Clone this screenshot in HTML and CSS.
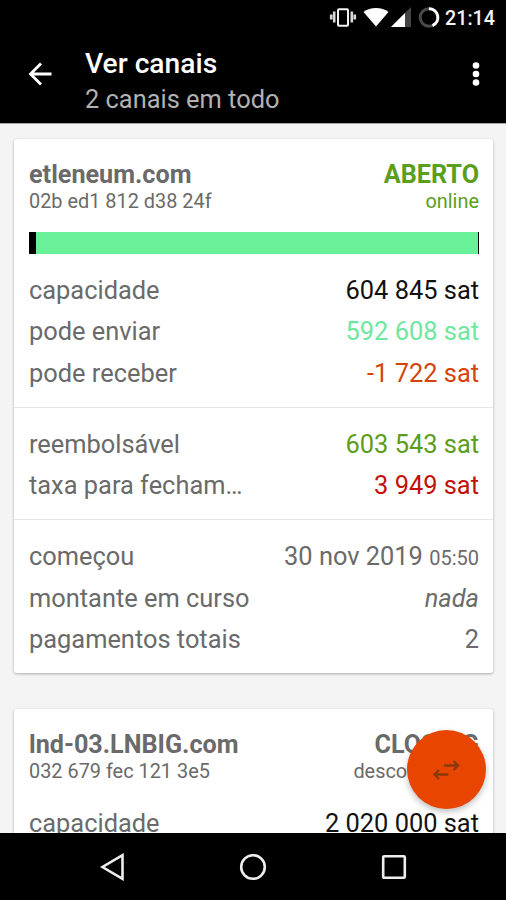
FILE: index.html
```html
<!DOCTYPE html>
<html lang="pt">
<head>
    <meta charset="UTF-8">
    <meta name="viewport" content="width=device-width, initial-scale=1.0">
    <title>Ver canais</title>
    <link rel="stylesheet" href="styles.css">
</head>
<body>
    <div class="status-bar">
        <svg class="status-icons" width="112" height="24" viewBox="0 0 112 24">
            <!-- vibrate -->
            <rect x="9" y="2.2" width="10" height="16.6" rx="1" fill="none" stroke="#f4f4f4" stroke-width="2"/>
            <path d="M5.200 4.500v11M2.200 7.500v5M22.800 4.500v11M25.800 7.500v5" stroke="#d8d8d8" stroke-width="2.600"/>
            <!-- wifi -->
            <path d="M34.500 5C41 -.2 53 -.2 59.500 5L47 19.500z" fill="#fff"/>
            <!-- signal -->
            <path d="M82 0V20H62z" fill="#444"/>
            <path d="M76 6V20H62z" fill="#fff"/>
            <!-- battery -->
            <circle cx="100" cy="10.500" r="8.800" fill="none" stroke="#4a4a4a" stroke-width="3"/>
            <path d="M100 1.700A8.800 8.800 0 0 1 103.500 18.600" fill="none" stroke="#fff" stroke-width="3"/>
        </svg>
        <span class="clock">21:14</span>
    </div>
    <header class="app-bar">
        <svg class="back" width="24" height="24" viewBox="0 0 24 24" fill="none" stroke="#fff" stroke-width="2.8">
            <path d="M23.500 12H2.500M13 1.500L2.500 12l10.500 10.500"/>
        </svg>
        <div class="titles">
            <h1>Ver canais</h1>
            <p>2 canais em todo</p>
        </div>
        <svg class="more" width="8" height="26" viewBox="0 0 8 26" fill="#fff">
            <circle cx="4" cy="4.500" r="3.300"/>
            <circle cx="4" cy="13" r="3.300"/>
            <circle cx="4" cy="21.500" r="3.300"/>
        </svg>
    </header>

    <main class="channels">
        <div class="card">
            <div class="card-head">
                <div>
                    <h2>etleneum.com</h2>
                    <p>02b ed1 812 d38 24f</p>
                </div>
                <div class="state open">
                    <h2>ABERTO</h2>
                    <p>online</p>
                </div>
            </div>
            <div class="balance"><div class="can-send"></div></div>
            <div class="section first">
                <div class="row"><span>capacidade</span><span class="black">604 845 sat</span></div>
                <div class="row"><span>pode enviar</span><span class="mint">592 608 sat</span></div>
                <div class="row"><span>pode receber</span><span class="orange">-1 722 sat</span></div>
            </div>
            <div class="section">
                <div class="row"><span>reembolsável</span><span class="green">603 543 sat</span></div>
                <div class="row"><span>taxa para fecham…</span><span class="red">3 949 sat</span></div>
            </div>
            <div class="section">
                <div class="row"><span>começou</span><span>30 nov 2019 <small>05:50</small></span></div>
                <div class="row"><span>montante em curso</span><em>nada</em></div>
                <div class="row"><span>pagamentos totais</span><span>2</span></div>
            </div>
        </div>

        <div class="card">
            <div class="card-head">
                <div>
                    <h2>lnd-03.LNBIG.com</h2>
                    <p>032 679 fec 121 3e5</p>
                </div>
                <div class="state">
                    <h2>CLOSING</h2>
                    <p>desconectado</p>
                </div>
            </div>
            <div class="section first closing">
                <div class="row"><span>capacidade</span><span class="black">2 020 000 sat</span></div>
            </div>
        </div>

        <button class="fab" aria-label="Transferir">
            <svg width="28" height="22" viewBox="0 0 28 22" fill="none" stroke="#8a3a0a" stroke-width="2.400">
                <path d="M12 6.500H26M21.500 2l4.500 4.500-4.500 4.500M16.500 15.500H2.500M7 11l-4.500 4.500 4.500 4.500"/>
            </svg>
        </button>
    </main>

    <nav class="nav-bar">
        <svg width="28" height="28" viewBox="0 0 28 28"><path d="M23.500 2.200V25.800L3.500 14z"/></svg>
        <svg width="28" height="28" viewBox="0 0 28 28"><circle cx="14" cy="14" r="11.800"/></svg>
        <svg width="28" height="28" viewBox="0 0 28 28"><rect x="3.200" y="3.200" width="21.600" height="21.600" rx="1"/></svg>
    </nav>
</body>
</html>
```
FILE: styles.css
```css
* {
    box-sizing: border-box;
}
body {
    margin: 0;
    height: 900px;
    display: flex;
    flex-direction: column;
    overflow: hidden;
    background: #000;
    color: #6a6a6a;
    font-family: Roboto, sans-serif;
    font-size: 25.4px;
}
h1, h2, p {
    margin: 0;
}
.status-bar {
    height: 35px;
    padding: 1px 11px 0 0;
    display: flex;
    justify-content: flex-end;
    align-items: center;
}
.status-icons {
    margin: 1px 4px 0 0;
}
.clock {
    color: #f4f4f4;
    font-size: 19.7px;
    font-weight: 500;
}
.app-bar {
    height: 88px;
    padding: 0 26px 0 28px;
    display: flex;
    align-items: center;
    color: #fff;
}
.back, .more {
    margin-bottom: 11px;
}
.titles {
    flex: 1;
    margin: 5px 0 0 33px;
}
.titles h1 {
    font-size: 28.2px;
    font-weight: 500;
    line-height: 36px;
}
.titles p {
    color: #b2b2b2;
    font-size: 25.4px;
    line-height: 35px;
}
.channels {
    position: relative;
    height: 710px;
    padding: 15px 13px 0 14px;
    overflow: hidden;
    background: #f4f4f4;
    border-top: 1px solid #a5a5a5;
}
.card {
    margin-bottom: 36px;
    background: #fff;
    border-radius: 3px;
    box-shadow: 0 1px 3px rgba(0, 0, 0, 0.3);
}
.card-head {
    display: flex;
    justify-content: space-between;
    padding: 21px 14px 0 15px;
}
.card-head h2 {
    font-size: 25.2px;
    font-weight: 700;
    line-height: 30px;
}
.card-head p {
    font-size: 19.9px;
    line-height: 24px;
}
.state {
    text-align: right;
}
.open, .green {
    color: #5a9e1c;
}
.balance {
    height: 22px;
    margin: 18px 14px 0 15px;
    padding: 0 1px 0 7px;
    background: #000;
}
.can-send {
    height: 100%;
    background: #68f198;
}
.section {
    padding: 16px 14px 12.5px 15px;
    border-top: 1px solid #e6e6e6;
}
.section.first {
    padding-top: 15.5px;
    border-top: none;
}
.section.closing {
    padding-top: 19px;
}
.row {
    display: flex;
    justify-content: space-between;
    height: 41.5px;
    line-height: 41.5px;
}
.row small {
    font-size: 20px;
}
.black {
    color: #111;
}
.mint {
    color: #6ee7a0;
}
.orange {
    color: #d4440a;
}
.red {
    color: #c4100c;
}
.fab {
    position: absolute;
    right: 20px;
    bottom: 24px;
    width: 79px;
    height: 79px;
    padding: 0 1px 0 0;
    display: flex;
    justify-content: center;
    align-items: center;
    border: none;
    border-radius: 50%;
    background: #e84600;
    box-shadow: 0 3px 6px rgba(0, 0, 0, 0.25);
}
.nav-bar {
    height: 67px;
    display: flex;
    justify-content: center;
    align-items: center;
    gap: 112.5px;
}
.nav-bar svg {
    fill: none;
    stroke: #eee;
    stroke-width: 2.6;
}
```
